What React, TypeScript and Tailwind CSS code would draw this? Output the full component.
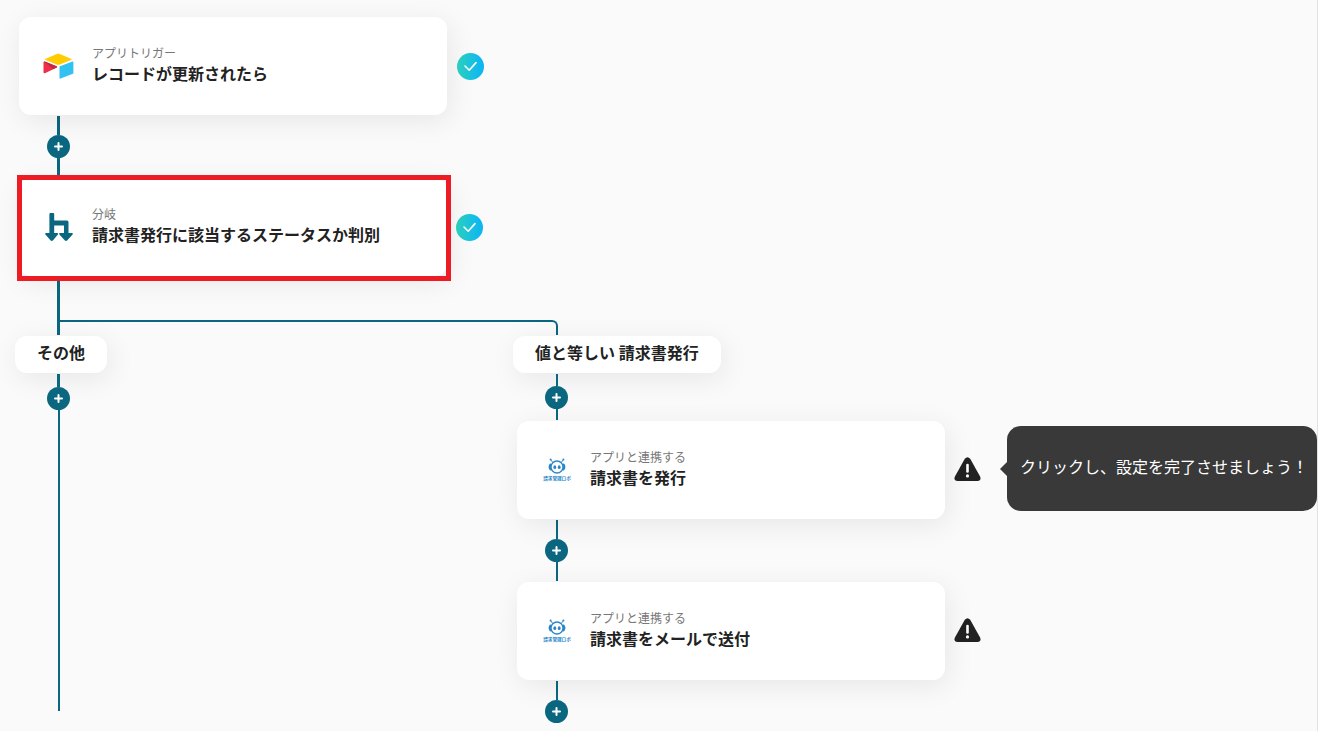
import type { ReactNode } from "react";

type NodeCardProps = {
  icon: ReactNode;
  kind: string;
  title: string;
  selected?: boolean;
};

function AirtableIcon() {
  return (
    <svg width="32" height="28" viewBox="0.5 -0.8 32 28" aria-hidden="true">
      <path
        d="M14.2 1.3 3.1 5.9c-.7.3-.7 1.1 0 1.4l11.2 4.4c1 .4 2.1.4 3.1 0l11.1-4.4c.7-.3.7-1.1 0-1.4L17.3 1.3c-1-.4-2.1-.4-3.1 0Z"
        fill="#fc0"
      />
      <path
        d="M17 14.2v10.9c0 .5.5.9 1 .7l12.4-4.9c.3-.1.5-.4.5-.7V9.4c0-.5-.5-.9-1-.7L17.5 13.5c-.3.1-.5.4-.5.7Z"
        fill="#31c2f2"
      />
      <path
        d="m14.2 14.7-3.6 1.8-.4.2-7.8 3.7c-.5.2-1.4-.1-1.4-.7V9.400c0-.6.8-.9 1.300-.7l11.800 4.700c.6.2.7 1 .1 1.300Z"
        fill="#ed3049"
      />
      <path d="m10.600 16.500-9-7.700c.2-.2.500-.2.700-.1l11.800 4.700c.6.2.7 1 .1 1.300Z" fill="#c62842" />
    </svg>
  );
}

function BranchIcon() {
  return (
    <svg width="28" height="30" viewBox="0 0 28 30" fill="#0b6780" aria-hidden="true">
      <path d="M4.400 2q0-1 1-1h2.800q1 0 1 1v6.500h12.800q1.500 0 1.500 1.500v11h3.600q1.200.4.500 1.400l-5.500 6.100q-1.100.9-2.200 0l-5.500-6.100q-.6-1 .5-1.400H19v-7.500H9.200V21h3.200q1.200.4.500 1.400l-5 6.100q-1.100.9-2.200 0L.4 22.400Q-.2 21.400.9 21h3.500Z" />
    </svg>
  );
}

function RobotIcon() {
  return (
    <svg width="28" height="26" viewBox="0 0 28 26" aria-hidden="true">
      <g transform="translate(0 1)">
        <g fill="none" stroke="#2a86c8">
          <circle cx="14" cy="9" r="6" strokeWidth="1.300" />
          <path d="M8 6Q5.400 9 8 12M20 6Q22.600 9 20 12" strokeWidth="2.200" />
          <path d="M9.800 4.500 7.800 1.900M18.200 4.500l2-2.600" strokeWidth="1" />
        </g>
        <g fill="#2a86c8">
          <circle cx="7.600" cy="1.600" r="1" />
          <circle cx="20.400" cy="1.600" r="1" />
          <ellipse cx="11.800" cy="9.200" rx="1.400" ry="1.900" />
          <ellipse cx="16.200" cy="9.200" rx="1.400" ry="1.900" />
        </g>
      </g>
      <text
        x="14"
        y="23"
        textAnchor="middle"
        fontSize="4.600"
        fontWeight="700"
        fill="#2a86c8"
      >
        請求管理ロボ
      </text>
    </svg>
  );
}

function CheckBadge() {
  return (
    <span className="flex size-[27px] shrink-0 items-center justify-center rounded-full bg-linear-to-r from-[#2dd4bf] to-[#0fb2f5]">
      <svg width="15" height="12" viewBox="0 0 15 12" role="img" aria-label="設定済み">
        <path
          d="m2 6 4.200 4.200 6.800-7.600"
          fill="none"
          stroke="#fff"
          strokeWidth="1.600"
          strokeLinecap="round"
          strokeLinejoin="round"
        />
      </svg>
    </span>
  );
}

function WarningBadge() {
  return (
    <svg
      className="shrink-0"
      width="27"
      height="24"
      viewBox="0 0 27 24"
      role="img"
      aria-label="未設定"
    >
      <path
        d="M10.800 1.800Q13.500-1.400 16.200 1.800L26.200 19.800Q27.500 23.700 23.500 24h-20Q-.5 23.700.8 19.800Z"
        fill="#222"
      />
      <path d="M13.500 8v6.500" stroke="#fff" strokeWidth="2.600" strokeLinecap="round" />
      <circle cx="13.500" cy="18.900" r="1.600" fill="#fff" />
    </svg>
  );
}

function NodeCard({ icon, kind, title, selected }: NodeCardProps) {
  return (
    <button
      type="button"
      className="relative flex h-[98px] w-[428px] shrink-0 items-center gap-[17px] rounded-xl bg-white pl-6 text-left shadow-[3px_6px_28px_rgba(0,0,0,0.08)]"
    >
      <span className="flex w-8 shrink-0 justify-center">{icon}</span>
      <span className="flex flex-col pb-[6px]">
        <span className="text-xs leading-5 text-[#777]">{kind}</span>
        <span className="text-base leading-5 font-bold text-[#222]">{title}</span>
      </span>
      {selected ? (
        <span className="absolute -top-[3px] -right-[4px] -bottom-[5px] -left-[2px] border-5 border-[#ed1c24]" />
      ) : null}
    </button>
  );
}

function BranchLabel({ children }: { children: ReactNode }) {
  return (
    <div className="w-fit rounded-xl bg-white px-[22px] pt-[5px] pb-[10px] text-base leading-[22px] font-bold text-[#222] shadow-[3px_6px_28px_rgba(0,0,0,0.08)]">
      {children}
    </div>
  );
}

function AddButton() {
  return (
    <button
      type="button"
      aria-label="追加"
      className="flex size-[23px] shrink-0 items-center justify-center rounded-full bg-[#0b6780]"
    >
      <svg width="9" height="9" viewBox="0 0 9 9" aria-hidden="true">
        <path d="M4.500 1v7M1 4.500h7" stroke="#fff" strokeWidth="2" strokeLinecap="round" />
      </svg>
    </button>
  );
}

export default function App() {
  return (
    <div className="flex min-h-screen bg-white pr-5 font-['Noto_Sans_CJK_JP',sans-serif]">
      <main className="flex-1 border-r border-[#e2e2e2] bg-[#fafafa] pt-[17px] pl-[15px]">
        <div className="flex items-center gap-[10px] pl-1">
          <NodeCard icon={<AirtableIcon />} kind="アプリトリガー" title="レコードが更新されたら" />
          <CheckBadge />
        </div>

        <div className="flex w-[87px] flex-col items-center py-px">
          <div className="h-[19px] w-[3px] bg-[#0b6780]" />
          <AddButton />
          <div className="h-[19px] w-[3px] bg-[#0b6780]" />
        </div>

        <div className="flex items-center gap-[9px] pl-1">
          <NodeCard
            icon={<BranchIcon />}
            kind="分岐"
            title="請求書発行に該当するステータスか判別"
            selected
          />
          <CheckBadge />
        </div>

        {/* fork */}
        <div className="flex flex-col pb-px pl-[42px]">
          <div className="h-11 w-[3px] bg-[#0b6780]" />
          <div className="flex h-[15px]">
            <div className="w-[3px] bg-[#0b6780]" />
            <div className="w-[498px] rounded-tr-md border-t-2 border-r-2 border-[#0b6780]" />
          </div>
        </div>

        <div className="flex">
          <div className="flex w-[498px] shrink-0 flex-col">
            <BranchLabel>その他</BranchLabel>
            <div className="flex w-[87px] flex-1 flex-col items-center pt-px pb-3">
              <div className="h-[13px] w-[3px] bg-[#0b6780]" />
              <AddButton />
              <div className="w-[2px] flex-1 bg-[#0b6780]" />
            </div>
          </div>

          <div className="flex flex-col">
            <BranchLabel>値と等しい 請求書発行</BranchLabel>
            <div className="flex w-[87px] flex-col items-center py-px">
              <div className="h-3 w-[2px] bg-[#0b6780]" />
              <AddButton />
              <div className="h-[11px] w-[2px] bg-[#0b6780]" />
            </div>

            <div className="flex items-center pl-1">
              <NodeCard icon={<RobotIcon />} kind="アプリと連携する" title="請求書を発行" />
              <div className="flex items-center pb-[3px] pl-[9px]">
                <WarningBadge />
                <svg className="ml-[19px]" width="7" height="14" viewBox="0 0 7 14" aria-hidden="true">
                  <path d="M7 0v14L0 7Z" fill="#393939" />
                </svg>
                <div
                  role="tooltip"
                  className="rounded-[14px] bg-[#393939] pt-[28px] pr-[9px] pb-[32px] pl-[13px] text-base leading-[25px] whitespace-nowrap text-white"
                >
                  クリックし、設定を完了させましょう！
                </div>
              </div>
            </div>

            <div className="flex w-[87px] flex-col items-center py-px">
              <div className="h-[19px] w-[2px] bg-[#0b6780]" />
              <AddButton />
              <div className="h-[19px] w-[2px] bg-[#0b6780]" />
            </div>

            <div className="flex items-center pl-1">
              <NodeCard icon={<RobotIcon />} kind="アプリと連携する" title="請求書をメールで送付" />
              <div className="pb-[3px] pl-[9px]">
                <WarningBadge />
              </div>
            </div>

            <div className="flex w-[87px] flex-col items-center pt-px">
              <div className="h-[19px] w-[2px] bg-[#0b6780]" />
              <AddButton />
            </div>
          </div>
        </div>
      </main>
    </div>
  );
}
